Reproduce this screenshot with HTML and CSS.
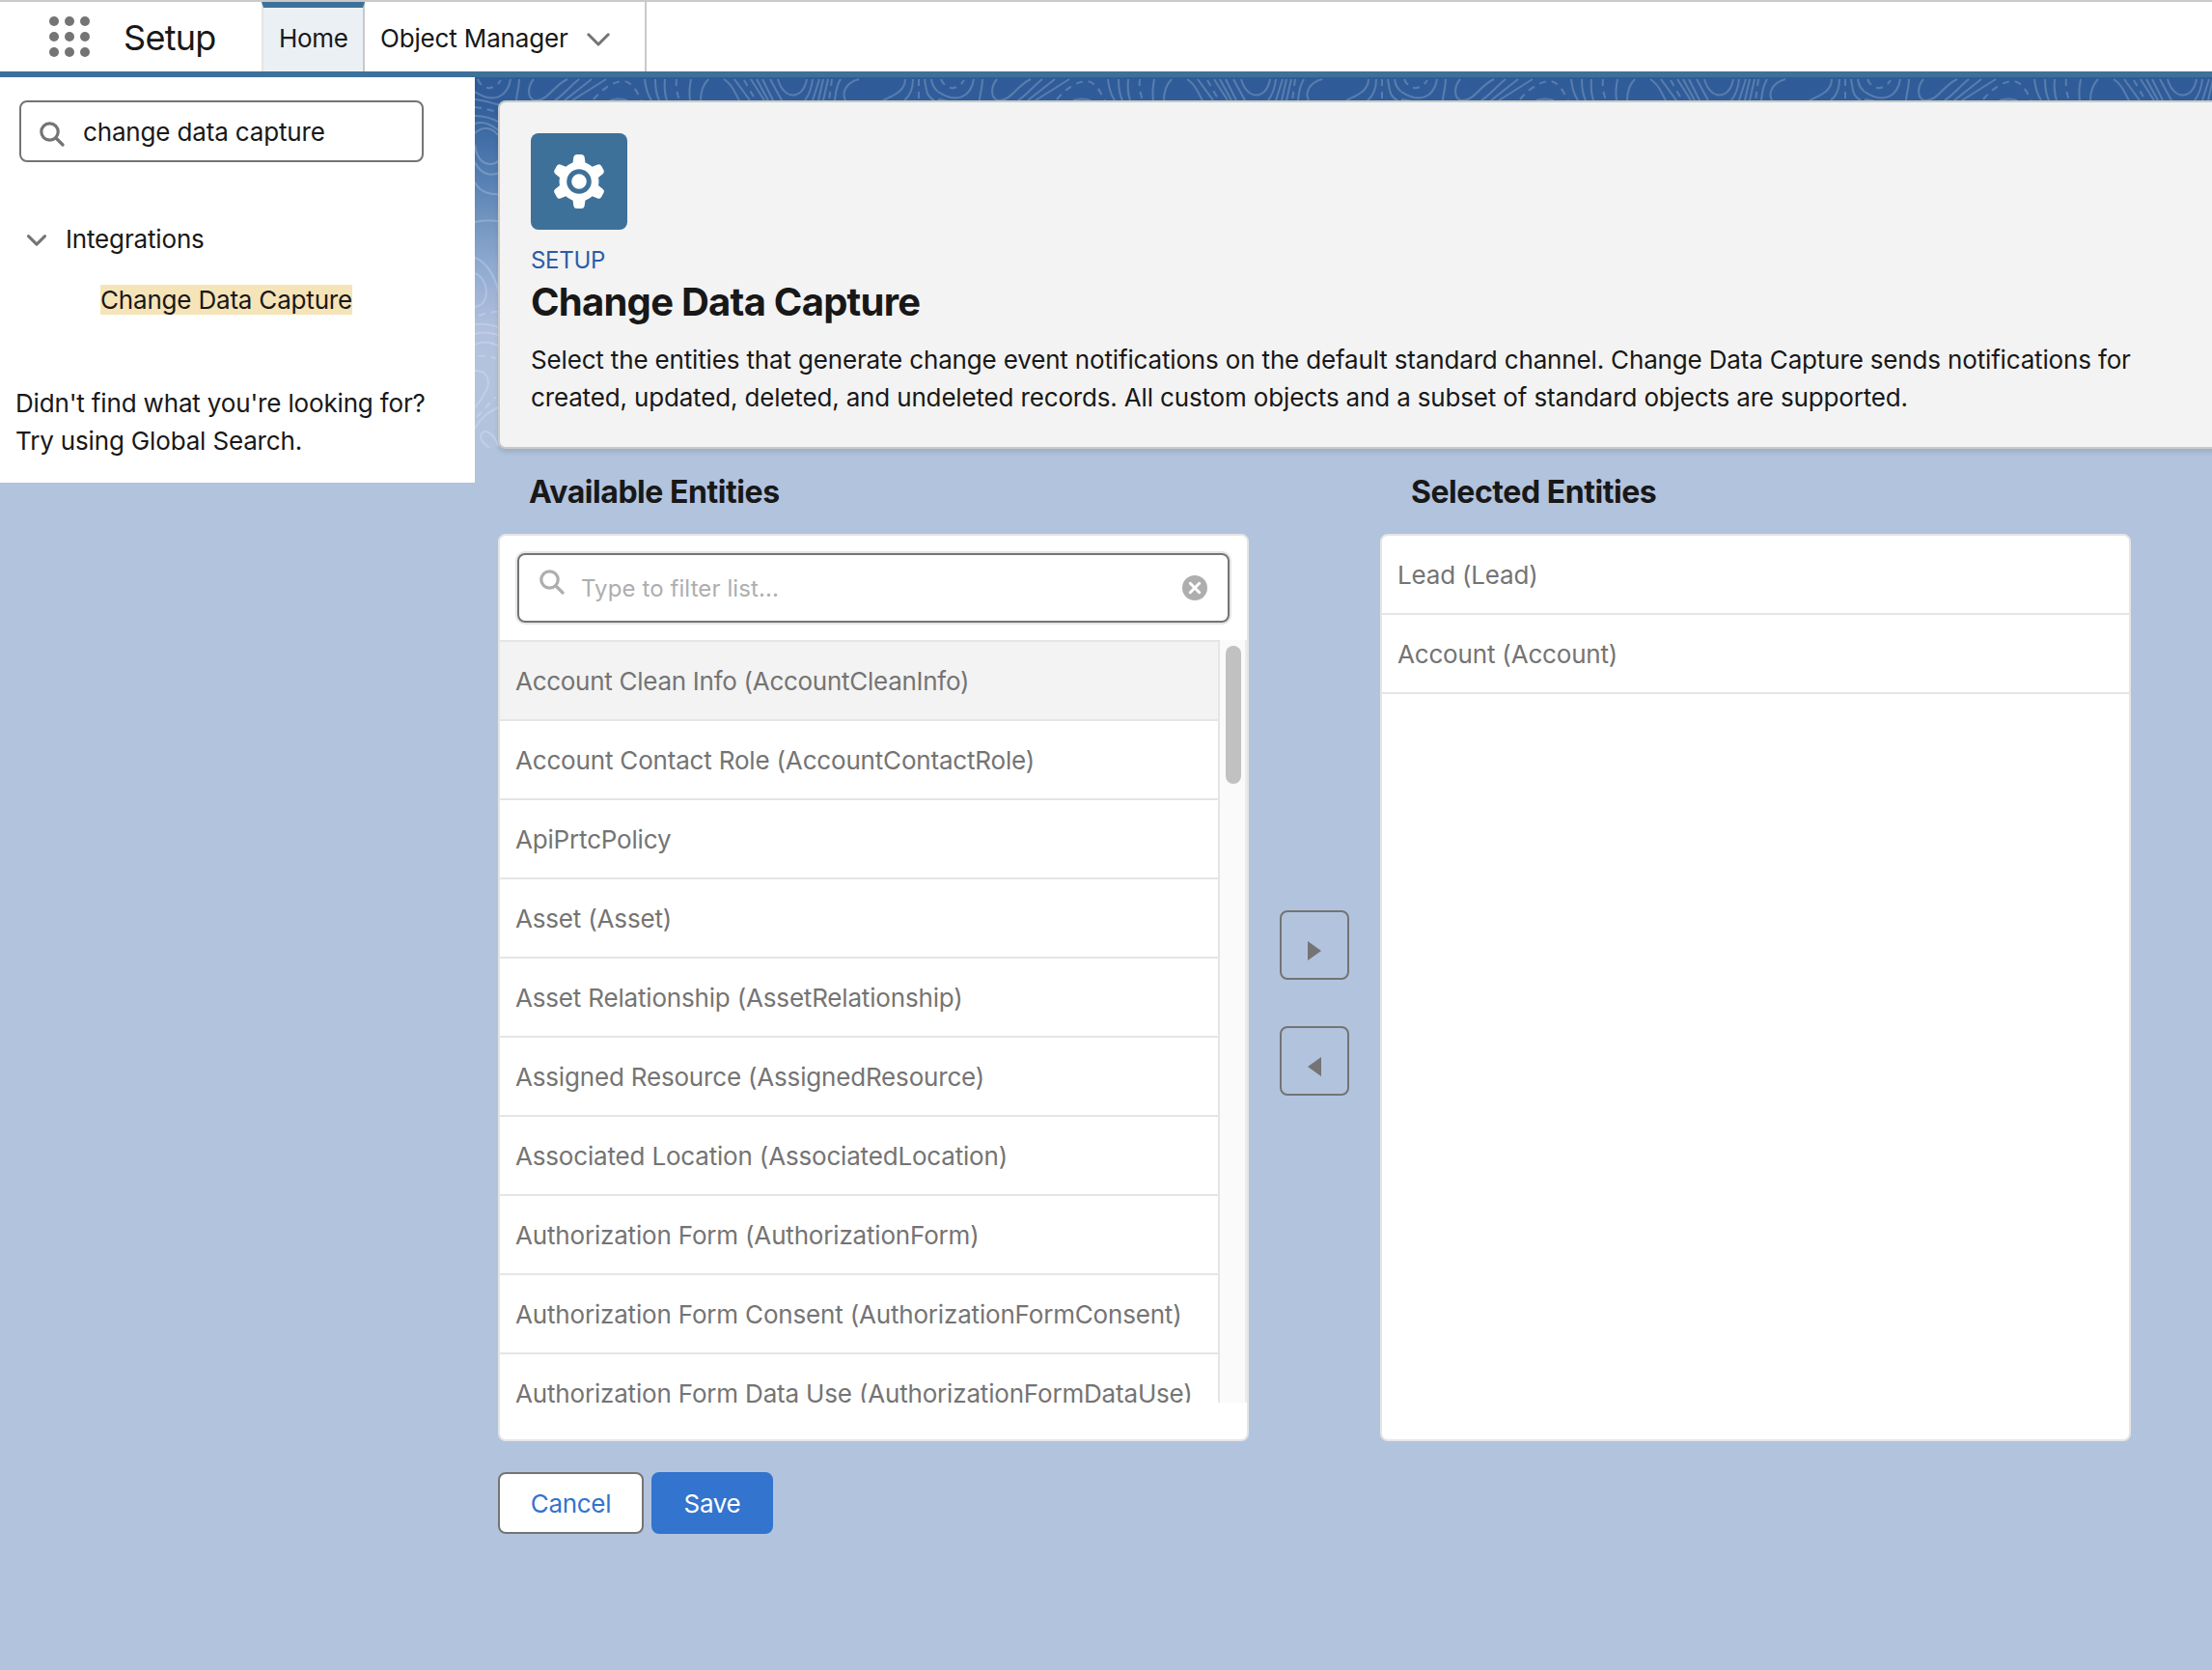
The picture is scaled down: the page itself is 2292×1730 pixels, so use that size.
FILE: index.html
```html
<!DOCTYPE html>
<html lang="en">

<head>
    <meta charset="UTF-8">
    <meta name="viewport" content="width=device-width, initial-scale=1.0">
    <title>Change Data Capture | Setup</title>
    <link rel="stylesheet" href="styles.css">
</head>

<body>

    <header class="topbar">
        <svg class="waffle" viewBox="0 0 42 42">
            <circle cx="5" cy="5" r="5" /><circle cx="21" cy="5" r="5" /><circle cx="37" cy="5" r="5" />
            <circle cx="5" cy="21" r="5" /><circle cx="21" cy="21" r="5" /><circle cx="37" cy="21" r="5" />
            <circle cx="5" cy="37" r="5" /><circle cx="21" cy="37" r="5" /><circle cx="37" cy="37" r="5" />
        </svg>
        <div class="app-name">Setup</div>
        <a class="tab active">Home</a>
        <a class="tab tab-menu">
            <span>Object Manager</span>
            <svg class="chevron" viewBox="0 0 24 14"><path d="M1.8 1.8L12 12L22.2 1.8" /></svg>
        </a>
    </header>

    <div class="layout">
        <aside class="sidebar">
            <div class="quick-find">
                <svg class="icon-search" viewBox="0 0 26 26"><circle cx="10.5" cy="10.5" r="8.7" /><path d="M17 17L24 24" /></svg>
                <span>change data capture</span>
            </div>
            <div class="tree-parent">
                <svg class="chevron small" viewBox="0 0 24 14"><path d="M1.8 1.8L12 12L22.2 1.8" /></svg>
                <span>Integrations</span>
            </div>
            <div class="tree-child"><mark>Change Data Capture</mark></div>
            <p class="not-found">Didn't find what you're looking for?<br>Try using Global Search.</p>
        </aside>

        <main class="content">
            <!-- contour lines behind the page header -->
            <svg class="contours">
                <defs>
                    <pattern id="topo" width="480" height="400" patternUnits="userSpaceOnUse">
                        <path d="M0 15C20 28 34 20 37 2M46 2C46 12 43 18 43 24M61 2C54 10 54 24 64 24C76 24 82 8 96 2M108 2C98 10 92 18 83 24M121 2L93 24M136 2L101 24M140 24Q149 21 158 24" />
                        <path d="M176 2C177 12 179 18 183 24M187 2C187 12 188 18 191 24M197 2C196 12 197 18 199 24M224 2C222 12 222 18 223 24M242 2C236 8 234 16 234 24" />
                        <path d="M258 2C268 8 270 18 274 24M269 2L285 24M286 2L300 24M292 2L304 24M298 2L309 24M306 2L318 24M314 2C320 24 340 24 344 2M350 2C349 12 345 20 342 24M357 2L350 24M361 2L356 24M366 2L361 24M379 2C374 10 374 16 373 24M398 2C384 6 380 16 384 24" />
                        <path d="M446 2C446 16 430 20 423 24M454 2C454 12 450 20 445 24M466 2C468 14 468 20 476 24M473 2C474 9 476 12 480 15" />
                        <path d="M0 23C12 24 20 28 28 29M0 40C10 40 16 42 26 47M0 48C10 45 18 50 26 56M0 58C8 50 18 52 24 60M0 70C2 84 8 90 16 90C22 90 26 86 28 82M0 88C6 100 16 104 28 98M0 109C6 120 16 122 28 121" />
                        <path d="M0 150C10 148 18 148 28 150M0 187C14 192 22 210 25 224M0 203C16 210 16 236 0 238M0 256C10 255 18 256 28 260M0 266C10 263 18 265 28 268M0 277C10 272 18 275 28 280" />
                        <path d="M0 304C14 303 16 316 12 324C8 332 4 338 0 342M0 364C8 350 16 346 28 340M24 382C20 368 8 362 6 372C6 380 16 382 20 390" />
                        <path class="dash" d="M3 2C8 14 20 14 27 3M123 23C132 12 144 4 154 4C164 5 168 16 173 24M209 2C208 12 210 18 212 24M279 3L291 24M370 2L367 24M460 2V24M0 31C10 32 14 34 24 36M4 247C12 244 18 243 28 243M4 289C12 288 18 289 22 292M2 352L22 331" />
                    </pattern>
                </defs>
                <rect width="100%" height="384" fill="url(#topo)" />
            </svg>

            <section class="page-header">
                <div class="header-icon">
                    <svg viewBox="0 0 100 100">
                        <g fill="#fff">
                            <circle cx="50" cy="50" r="20.5" />
                            <path id="tooth" d="M43 34L44.4 24.5Q45 22 47.5 22H52.5Q55 22 55.6 24.5L57 34Z" />
                            <use href="#tooth" transform="rotate(60 50 50)" />
                            <use href="#tooth" transform="rotate(120 50 50)" />
                            <use href="#tooth" transform="rotate(180 50 50)" />
                            <use href="#tooth" transform="rotate(240 50 50)" />
                            <use href="#tooth" transform="rotate(300 50 50)" />
                        </g>
                        <circle class="gear-ring" cx="50" cy="50" r="10.3" />
                    </svg>
                </div>
                <div class="eyebrow">SETUP</div>
                <h1>Change Data Capture</h1>
                <p>Select the entities that generate change event notifications on the default standard channel. Change Data Capture sends notifications for<br>created, updated, deleted, and undeleted records. All custom objects and a subset of standard objects are supported.</p>
            </section>

            <section class="picker">
                <div class="column">
                    <h2>Available Entities</h2>
                    <div class="panel">
                        <div class="filter">
                            <svg class="icon-search light" viewBox="0 0 26 26"><circle cx="10.5" cy="10.5" r="8.7" /><path d="M17 17L24 24" /></svg>
                            <span>Type to filter list...</span>
                            <svg class="icon-clear" viewBox="0 0 26 26"><circle cx="13" cy="13" r="13" /><path d="M8.3 8.3L17.7 17.7M17.7 8.3L8.3 17.7" /></svg>
                        </div>
                        <div class="scroller">
                            <ul class="list">
                                <li class="hover">Account Clean Info (AccountCleanInfo)</li>
                                <li>Account Contact Role (AccountContactRole)</li>
                                <li>ApiPrtcPolicy</li>
                                <li>Asset (Asset)</li>
                                <li>Asset Relationship (AssetRelationship)</li>
                                <li>Assigned Resource (AssignedResource)</li>
                                <li>Associated Location (AssociatedLocation)</li>
                                <li>Authorization Form (AuthorizationForm)</li>
                                <li>Authorization Form Consent (AuthorizationFormConsent)</li>
                                <li>Authorization Form Data Use (AuthorizationFormDataUse)</li>
                            </ul>
                            <div class="track"><div class="thumb"></div></div>
                        </div>
                    </div>
                </div>

                <div class="movers">
                    <button class="mover"><svg viewBox="0 0 14 20"><path d="M0 0L14 10L0 20Z" /></svg></button>
                    <button class="mover"><svg viewBox="0 0 14 20"><path d="M14 0L0 10L14 20Z" /></svg></button>
                </div>

                <div class="column">
                    <h2>Selected Entities</h2>
                    <div class="panel">
                        <ul class="list selected">
                            <li>Lead (Lead)</li>
                            <li>Account (Account)</li>
                        </ul>
                    </div>
                </div>
            </section>

            <div class="actions">
                <button class="btn">Cancel</button>
                <button class="btn brand">Save</button>
            </div>
        </main>
    </div>

</body>

</html>
```
FILE: styles.css
```css
* {
    box-sizing: border-box;
}

body {
    margin: 0;
    height: 1730px;
    overflow: hidden;
    background-color: #b2c3de;
    color: #181818;
    font-family: Inter, "Liberation Sans", sans-serif;
    font-size: 26px;
    line-height: 39px;
    letter-spacing: -0.16px;
}

h1, h2, p, ul {
    margin: 0;
    padding: 0;
}

svg {
    display: block;
    flex: none;
}

/* top navigation */
.topbar {
    height: 80px;
    display: flex;
    background-color: #fff;
    border-top: 2px solid #c9c9c9;
    border-bottom: 6px solid #3e7199;
}

.waffle {
    width: 42px;
    height: 42px;
    margin: 15px 0 0 51px;
    fill: #747474;
}

.app-name {
    width: 178px;
    padding: 18px 0 0 35px;
    font-size: 36px;
    letter-spacing: -0.7px;
}

.tab {
    padding: 18px 0 0 17px;
    white-space: nowrap;
}

.tab.active {
    width: 107px;
    padding: 12px 0 0 16px;
    background-color: #ebf0f4;
    border-top: 6px solid #3e7199;
    border-left: 2px solid #e5e5e5;
    border-right: 2px solid #c9c9c9;
    letter-spacing: -0.35px;
}

.tab-menu {
    width: 292px;
    padding-left: 16px;
    display: flex;
    border-right: 2px solid #c9c9c9;
}

.chevron {
    width: 24px;
    height: 14px;
    margin: 14px 0 0 auto;
    fill: none;
    stroke: #747474;
    stroke-width: 3;
    stroke-linecap: round;
    stroke-linejoin: round;
}

.tab-menu .chevron {
    margin-right: 36px;
}

.chevron.small {
    width: 20px;
    height: 12px;
    margin: 3px 20px 0 0;
    stroke-width: 3.6;
}

.layout {
    display: flex;
    align-items: flex-start;
}

/* left side */
.sidebar {
    width: 492px;
    height: 420px;
    flex: none;
    padding-top: 24px;
    background-color: #fff;
}

.quick-find {
    width: 419px;
    height: 64px;
    margin-left: 20px;
    padding: 1px 0 0 19px;
    display: flex;
    align-items: center;
    border: 2px solid #747474;
    border-radius: 8px;
}

.icon-search {
    width: 26px;
    height: 26px;
    margin: 5px 19px 0 0;
    fill: none;
    stroke: #747474;
    stroke-width: 3.2;
    stroke-linecap: round;
}

.icon-search.light {
    stroke: #aeaeae;
}

.tree-parent {
    margin: 60px 0 0 28px;
    display: flex;
    align-items: center;
}

.tree-child {
    margin: 24px 0 0 104px;
}

mark {
    background-color: #f6e4b9;
    color: #181818;
    letter-spacing: -0.19px;
}

.not-found {
    margin: 68px 0 0 16px;
    white-space: nowrap;
}

/* main area */
.content {
    width: 1800px;
    flex: none;
    padding: 24px 0 0 24px;
    position: relative;
    background-image: linear-gradient(#2f5c98 0, #305d9a 24px, #3f6ca5 60px, #5580b3 105px, #7396c0 150px, #8ba8cf 190px, #9db2d6 220px, #b0c0de 260px, #b2c3de 290px);
}

.contours {
    position: absolute;
    left: 0;
    top: 0;
    width: 100%;
    height: 400px;
}

.contours path {
    fill: none;
    stroke: #fff;
    stroke-opacity: 0.2;
    stroke-width: 2;
}

.contours .dash {
    stroke-dasharray: 7 6;
}

.page-header {
    width: 1800px;
    height: 361px;
    padding: 32px 0 0 32px;
    position: relative;
    background-color: #f3f3f3;
    border: 2px solid #c9c9c9;
    border-radius: 8px;
    box-shadow: 0 4px 4px rgba(0, 0, 0, 0.1);
}

.header-icon {
    width: 100px;
    height: 100px;
    border-radius: 8px;
    background-color: #3e7199;
}

.gear-ring {
    fill: none;
    stroke: #3e7199;
    stroke-width: 5;
}

.eyebrow {
    margin-top: 12px;
    color: #2a5caa;
    font-size: 24px;
    letter-spacing: -0.3px;
}

h1 {
    margin-top: -1px;
    font-size: 40px;
    line-height: 50px;
    font-weight: 700;
    letter-spacing: -0.75px;
}

.page-header p {
    margin-top: 15px;
    white-space: nowrap;
}

.picker {
    display: flex;
}

.column {
    width: 778px;
}

h2 {
    padding: 25px 0 24px 32px;
    font-size: 32px;
    font-weight: 650;
    letter-spacing: -0.45px;
}

.panel {
    height: 940px;
    background-color: #fff;
    border: 2px solid #e5e5e5;
    border-radius: 8px;
}

.filter {
    height: 72px;
    margin: 18px 18px 18px;
    padding: 0 21px;
    display: flex;
    align-items: center;
    border: 2px solid #747474;
    border-radius: 8px;
    box-shadow: 0 0 0 2px #e5e5e5;
    color: #aeaeae;
    font-size: 24px;
    letter-spacing: 0.1px;
}

.filter .icon-search {
    margin: -12px 17px 0 0;
}

.icon-clear {
    width: 26px;
    height: 26px;
    margin-left: auto;
    fill: #aeaeae;
    stroke: #fff;
    stroke-width: 3;
    stroke-linecap: round;
}

.icon-clear circle {
    stroke: none;
}

.scroller {
    height: 790px;
    display: flex;
    overflow: hidden;
}

.list {
    flex: 1;
    list-style: none;
    color: #747474;
    border-right: 2px solid #e5e5e5;
    letter-spacing: -0.18px;
}

.list li {
    height: 82px;
    padding: 21px 0 0 16px;
    border-top: 2px solid #e5e5e5;
    white-space: nowrap;
}

.list li.hover {
    background-color: #f3f3f3;
    letter-spacing: -0.28px;
}

.list.selected {
    border-right: none;
}

.list.selected li {
    border-top: none;
    border-bottom: 2px solid #e5e5e5;
}

.track {
    width: 28px;
    padding: 6px 0 0 6px;
    background-color: #fafafa;
    border-right: 2px solid #ededed;
}

.thumb {
    width: 16px;
    height: 143px;
    border-radius: 8px;
    background-color: #c1c1c1;
}

.movers {
    width: 136px;
    padding: 478px 32px 0;
}

.mover {
    width: 72px;
    height: 72px;
    margin-bottom: 48px;
    padding: 12px 0 0;
    display: flex;
    align-items: center;
    justify-content: center;
    background: none;
    border: 2px solid #747474;
    border-radius: 8px;
}

.mover svg {
    width: 14px;
    height: 20px;
    fill: #747474;
}

.actions {
    margin-top: 32px;
    display: flex;
    gap: 8px;
}

.btn {
    width: 151px;
    height: 64px;
    padding: 0;
    font: inherit;
    letter-spacing: -0.3px;
    color: #3274ce;
    background-color: #fff;
    border: 2px solid #747474;
    border-radius: 8px;
}

.btn.brand {
    width: 126px;
    color: #fff;
    background-color: #3274ce;
    border-color: #3274ce;
}
```
